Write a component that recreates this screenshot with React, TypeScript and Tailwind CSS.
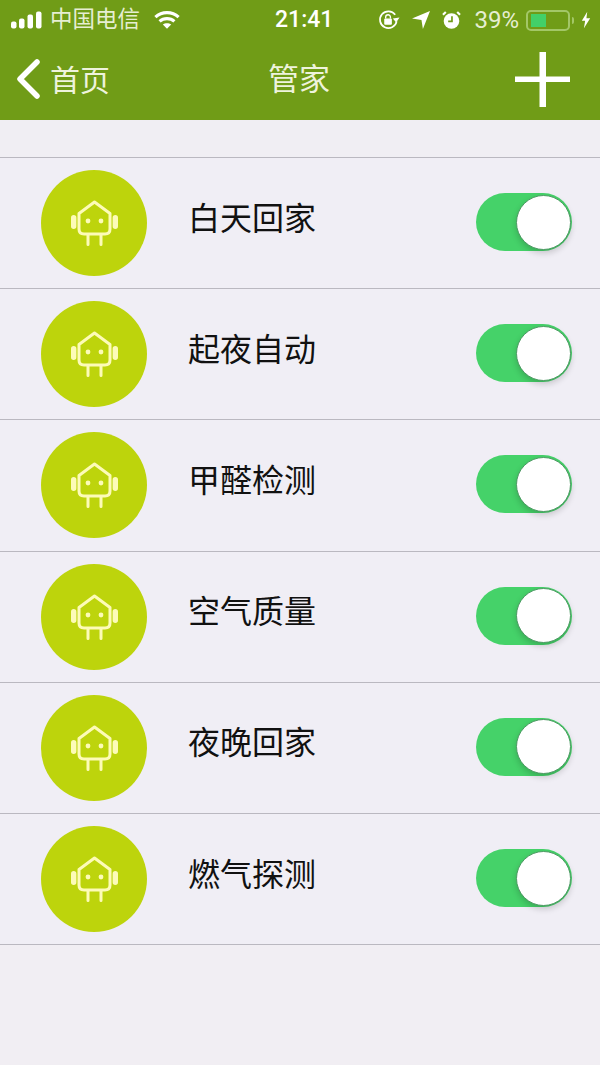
import React from "react";

const rows = ["白天回家", "起夜自动", "甲醛检测", "空气质量", "夜晚回家", "燃气探测"];

const cjk = "font-['Liberation_Sans','Noto_Sans_CJK_SC',sans-serif]";

const Signal = () => (
  <svg width="31" height="18" viewBox="0 0 31 18" fill="#fff">
    <rect x="0" y="10.5" width="5.5" height="7" rx="2" />
    <rect x="8" y="7.5" width="5.5" height="10" rx="2" />
    <rect x="16.5" y="3.5" width="5.5" height="14" rx="2" />
    <rect x="25" y="0.5" width="5.5" height="17" rx="2" />
  </svg>
);

const Wifi = () => (
  <svg width="26" height="20" viewBox="0 0 28 20" fill="none" stroke="#fff" strokeWidth="3.4">
    <path d="M1.5 7 C8.5 0.5 19.5 0.5 26.5 7" />
    <path d="M6 11.5 C10.5 7.5 17.5 7.5 22 11.5" />
    <path d="M14 19.5 L9.5 14.8 C12 13 16 13 18.5 14.8 Z" fill="#fff" stroke="none" />
  </svg>
);

const LockRotate = () => (
  <svg width="22" height="22" viewBox="0 0 23 22" fill="none" stroke="#fff" strokeWidth="1.8">
    <path d="M19.5 12.5 A8.8 8.8 0 1 1 18 5.5" />
    <path d="M22.5 8.5 L19 13.5 L15.5 9.5 Z" fill="#fff" stroke="none" />
    <rect x="6.5" y="9.5" width="8" height="6.5" rx="1" fill="#fff" stroke="none" />
    <path d="M8 9.5 V8 A2.5 2.5 0 0 1 13 8 V9.5" strokeWidth="1.4" />
  </svg>
);

const Arrow = () => (
  <svg width="18" height="20" viewBox="0 0 19 20" fill="#fff">
    <path d="M0 8.5 L19 0.5 L11.5 19.5 L10 10 Z" />
  </svg>
);

const Alarm = () => (
  <svg width="19" height="20" viewBox="0 0 20 20" fill="none">
    <circle cx="10" cy="11" r="8.2" fill="#fff" />
    <path d="M10.5 6 V11.5 H6.5" stroke="#709c17" strokeWidth="1.8" />
    <path d="M1 4.5 L4 1.5 M19 4.5 L16 1.5" stroke="#fff" strokeWidth="2.2" />
  </svg>
);

const Bolt = () => (
  <svg width="10" height="20" viewBox="0 0 12 20" fill="#fff">
    <path d="M7.5 0 L1 11 H5 L3.5 20 L11 8 H6.5 Z" />
  </svg>
);

const Battery = () => (
  <div className="flex items-center">
    <div className="flex h-[21px] w-[44px] items-center rounded-[5px] border-2 border-[#a3c767] px-[3px]">
      <div className="h-[13px] w-[15px] bg-[#43d068]" />
    </div>
    <div className="ml-[2px] h-[7px] w-[2px] rounded-r-sm bg-[#a3c767]" />
  </div>
);

const Robot = () => (
  <svg width="50" height="50" viewBox="0 0 50 50" fill="none" stroke="#fdfbb8" strokeWidth="3" strokeLinejoin="round" strokeLinecap="round">
    <path d="M25.5 4 L41 15.5 V31 Q41 36 36 36 H15 Q10 36 10 31 V15.5 Z" />
    <rect x="3.5" y="18.5" width="2.4" height="11" rx="1.2" />
    <rect x="45.1" y="18.5" width="2.4" height="11" rx="1.2" />
    <path d="M19 36.5 V46.5 M32 36.5 V46.5" />
    <circle cx="19" cy="23" r="2.4" fill="#fdfbb8" stroke="none" />
    <circle cx="32" cy="23" r="2.4" fill="#fdfbb8" stroke="none" />
  </svg>
);

const Toggle = () => (
  <div className="mb-[2px] flex h-[58px] w-[96px] items-center justify-end rounded-full bg-[#45d269] pr-[1px]">
    <div className="h-[55px] w-[55px] rounded-full border border-[#4e9a64] bg-white shadow-[0_3px_6px_rgba(0,0,0,0.18)]" />
  </div>
);

const Row = ({ title }: { title: string }) => (
  <div className="flex h-[131.2px] items-center border-b border-[#bab8c0] pl-[41px] pr-[28px]">
    <div className="flex h-[106px] w-[106px] items-center justify-center rounded-full bg-[#bdd40c]">
      <Robot />
    </div>
    <div className="mb-[9px] ml-[41px] flex-1 text-[32px] leading-none text-[#111]">{title}</div>
    <Toggle />
  </div>
);

export default function App() {
  return (
    <div className={`${cjk} flex h-[1065px] w-[600px] flex-col overflow-hidden bg-[#f0eef5]`}>
      <div className="h-[120px] bg-[#709c17] text-white">
        <div className="flex h-[40px] items-center pl-[11px] pr-[9px]">
          <div className="flex w-[264px] items-center">
            <Signal />
            <span className="ml-[8px] text-[22.5px] text-[#e6eed2]">中国电信</span>
            <span className="ml-[14px]"><Wifi /></span>
          </div>
          <div className="font-['Roboto',sans-serif] text-[23px] font-medium">21:41</div>
          <div className="ml-auto flex items-center">
            <LockRotate />
            <span className="ml-[12px]"><Arrow /></span>
            <span className="ml-[12px]"><Alarm /></span>
            <span className="ml-[13px] font-['Roboto',sans-serif] text-[24px] font-normal text-[#e6eed2]">39%</span>
            <span className="ml-[7px]"><Battery /></span>
            <span className="ml-[7px]"><Bolt /></span>
          </div>
        </div>
        <div className="flex h-[80px] items-center pl-[17px] pr-[30px]">
          <div className="flex w-[251px] items-center">
            <svg className="mb-[2px]" width="23" height="40" viewBox="0 0 23 40" fill="none" stroke="#fff" strokeWidth="5.5" strokeLinecap="round" strokeLinejoin="round">
              <path d="M20 3 L3 20 L20 37" />
            </svg>
            <span className="ml-[10px] text-[30px] text-[#eef3dc]">首页</span>
          </div>
          <div className="text-[31px] text-[#eef3dc]">管家</div>
          <svg className="mb-[2px] ml-auto" width="55" height="55" viewBox="0 0 55 55" fill="#fff">
            <rect x="24.5" y="0" width="6.5" height="55" />
            <rect x="0" y="24.5" width="55" height="5.5" />
          </svg>
        </div>
      </div>
      <div className="h-[38px] border-b border-[#bab8c0] bg-[#f0eef3]" />
      {rows.map((t) => (
        <Row key={t} title={t} />
      ))}
      <div className="flex-1 bg-[#f1eef3]" />
    </div>
  );
}
